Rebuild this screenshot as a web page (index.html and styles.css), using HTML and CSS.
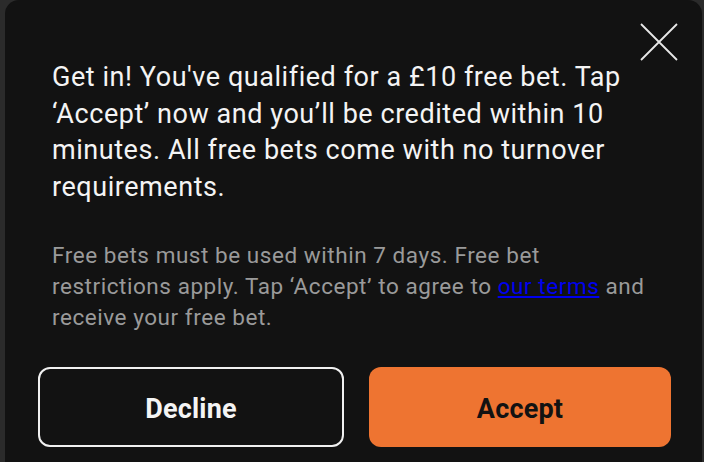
FILE: index.html
```html
<!DOCTYPE html>
<html lang="en">
<head>
<meta charset="utf-8">
<title>Free bet</title>
<link rel="stylesheet" href="styles.css">
</head>
<body>
<div class="modal">
  <button class="close" aria-label="Close">
    <svg width="38" height="38" viewBox="0 0 38 38"><path d="M1 1 L37 37 M37 1 L1 37" stroke="#e8e8e8" stroke-width="1.8" fill="none"/></svg>
  </button>
  <div class="content">
    <p class="lead">Get in! You've qualified for a £10 free bet. Tap ‘Accept’ now and you’ll be credited within 10 minutes. All free bets come with no turnover requirements.</p>
    <p class="terms">Free bets must be used within 7 days. Free bet restrictions apply. Tap ‘Accept’ to agree to <a href="#">our terms</a> and receive your free bet.</p>
  </div>
  <div class="actions">
    <button class="btn btn-decline">Decline</button>
    <button class="btn btn-accept">Accept</button>
  </div>
</div>
</body>
</html>
```
FILE: styles.css
```css
html, body {
  margin: 0;
  padding: 0;
  height: 100%;
  overflow: hidden;
}
body {
  background: #2b2b2b;
  font-family: Roboto, "Liberation Sans", sans-serif;
}
.modal {
  position: relative;
  margin-left: 5px;
  width: 697px;
  min-height: 100%;
  background: #121212;
  border-radius: 14px 14px 0 0;
  padding: 0 31px 0 33px;
  box-sizing: border-box;
}
.close {
  position: absolute;
  top: 23px;
  right: 24px;
  width: 38px;
  height: 38px;
  padding: 0;
  border: 0;
  background: none;
  cursor: pointer;
}
.close svg { display: block; }
.content {
  padding: 59px 10px 0 14px;
}
.lead {
  margin: 0;
  color: #f4f4f4;
  font-size: 27px;
  letter-spacing: 0.55px;
  line-height: 36.5px;
}
.terms {
  margin: 35px 0 0;
  color: #9a9a9a;
  font-size: 22.5px;
  letter-spacing: 0.55px;
  line-height: 31px;
}
.terms a {
  color: #0000ee;
  text-decoration: underline;
}
.actions {
  display: flex;
  gap: 25px;
  margin-top: 34px;
}
.btn {
  flex: 1;
  height: 80px;
  padding: 4px 0 0;
  border-radius: 12px;
  font-family: Roboto, "Liberation Sans", sans-serif;
  font-size: 27px;
  font-weight: 700;
  letter-spacing: 0.2px;
  box-sizing: border-box;
  cursor: pointer;
}
.btn-decline {
  background: transparent;
  color: #f4f4f4;
  border: 2px solid #f0f0f0;
}
.btn-accept {
  background: #ee7431;
  color: #121212;
  border: 0;
}
```
